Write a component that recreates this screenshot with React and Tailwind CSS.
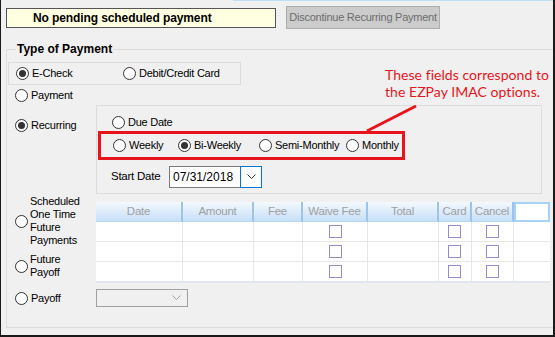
import React from "react";

const cols = [
  { name: "Date", w: "w-[87px]" },
  { name: "Amount", w: "w-[71px]" },
  { name: "Fee", w: "w-[49px]" },
  { name: "Waive Fee", w: "w-[65px]", box: "ml-[26px]" },
  { name: "Total", w: "w-[71px]" },
  { name: "Card", w: "w-[33px]", box: "ml-[9px]" },
  { name: "Cancel", w: "w-[42px]", box: "ml-[14px]" },
];

const Radio = ({ checked, label, className = "" }) => (
  <div className={`flex items-center ${className}`}>
    <span className="w-[13px] h-[13px] rounded-full border border-[#333] bg-white flex items-center justify-center shrink-0">
      {checked && <span className="w-[7px] h-[7px] rounded-full bg-[#333]" />}
    </span>
    {label && <span className="ml-[3px] leading-[13px] whitespace-nowrap">{label}</span>}
  </div>
);

const Check = ({ className }) => (
  <span className={`block w-[13px] h-[13px] border border-[#958dcb] bg-white ${className}`} />
);

const Chevron = ({ color = "#333" }) => (
  <svg width="9" height="6" viewBox="0 0 9 6">
    <path d="M0.5 0.5 L4.5 4.5 L8.5 0.5" fill="none" stroke={color} strokeWidth="1" />
  </svg>
);

export default function App() {
  return (
    <div
      className="relative w-[555px] h-[337px] bg-[#f0f0f0] border-l-[1px] border-r-2 border-b-2 border-[#1a1a1a] text-[11px] tracking-[-0.25px] text-black overflow-hidden"
      style={{ fontFamily: '"Liberation Sans", Arial, sans-serif' }}
    >
      <div className="absolute top-0 left-[232px] right-0 h-[1px] bg-[#bfe0f2]" />

      {/* top bar */}
      <div className="flex items-center pt-[6px] pl-[5px]">
        <div className="w-[270px] h-[20px] bg-[#ffffe1] border border-[#555] flex items-center pl-[26px] font-bold text-[12px] tracking-[-0.1px] whitespace-nowrap">
          No pending scheduled payment
        </div>
        <div className="ml-[10px] w-[154px] h-[23px] bg-[#cccccc] border border-[#adadad] flex items-center justify-center text-[#6d6d6d] whitespace-nowrap">
          Discontinue Recurring Payment
        </div>
      </div>

      {/* group box */}
      <div className="relative mt-[20px] ml-[5px] w-[560px] h-[279px] border border-[#dcdcdc]">
        <span className="absolute -top-[8px] left-[9px] px-[1px] bg-[#f0f0f0] font-bold text-[12px] tracking-[0px] leading-[14px]">
          Type of Payment
        </span>

        <div className="mt-[12px] ml-[1px] w-[233px] h-[23px] border border-[#dcdcdc] flex items-center pl-[7px]">
          <Radio checked label="E-Check" className="w-[107px]" />
          <Radio label="Debit/Credit Card" />
        </div>

        <Radio label="Payment" className="mt-[4px] ml-[8px]" />

        <div className="flex mt-[3px]">
          <div className="w-[89px] pl-[8px] pt-[14px]">
            <Radio checked label="Recurring" />
          </div>
          <div className="w-[446px] h-[89px] border border-[#dcdcdc]">
            <Radio label="Due Date" className="mt-[10px] ml-[15px]" />
            <div className="mt-[2px] ml-[1px] w-[307px] h-[29px] border-[3px] border-[#e8141c] flex items-center pl-[12px]">
              <Radio label="Weekly" className="w-[65px]" />
              <Radio checked label="Bi-Weekly" className="w-[81px]" />
              <Radio label="Semi-Monthly" className="w-[87px]" />
              <Radio label="Monthly" />
            </div>
            <div className="flex items-center mt-[6px] ml-[14px]">
              <span className="w-[58px] text-[11.5px]">Start Date</span>
              <div className="relative w-[93px] h-[22px] border border-[#7a7a7a] bg-white flex items-center pl-[3px] text-[12px] tracking-[0px]">
                07/31/2018
                <div className="absolute right-[-1px] top-[-1px] w-[22px] h-[22px] border border-[#0078d7] flex items-center justify-center">
                  <Chevron />
                </div>
              </div>
            </div>
          </div>
        </div>

        {/* scheduled table */}
        <div className="flex mt-[8px]">
          <div className="w-[89px] pl-[8px]">
            <div className="flex items-center mt-[-7px]">
              <Radio />
              <div className="ml-[2px] leading-[13px]">
                Scheduled<br />One Time<br />Future<br />Payments
              </div>
            </div>
            <div className="flex items-center mt-[6px]">
              <Radio />
              <div className="ml-[2px] leading-[13px]">
                Future<br />Payoff
              </div>
            </div>
          </div>
          <div className="w-[454px] border-b border-[#dbe7f3]">
            <div className="flex h-[20px]">
              {cols.map((c) => (
                <div
                  key={c.name}
                  className={`${c.w} h-full flex items-center justify-center text-[#a0a0a0] text-[11.5px] bg-gradient-to-b from-[#f4f9fe] to-[#c6dff7] border-r-2 border-[#9cc3ea] border-b border-b-[#b9d6f2] whitespace-nowrap`}
                >
                  {c.name}
                </div>
              ))}
              <div className="w-[36px] h-full bg-white border-2 border-[#a6d2f7]" />
            </div>
            {[0, 1, 2].map((r) => (
              <div key={r} className="flex h-[20px] bg-white">
                {cols.map((c) => (
                  <div
                    key={c.name}
                    className={`${c.w} h-full flex items-center border-r border-b border-[#e6e6e6]`}
                  >
                    {c.box && <Check className={c.box} />}
                  </div>
                ))}
                <div className="w-[36px] h-full border-b border-[#e6e6e6]" />
              </div>
            ))}
          </div>
        </div>

        <div className="flex items-center mt-[6px]">
          <div className="w-[89px] pl-[8px]">
            <Radio label="Payoff" />
          </div>
          <div className="w-[92px] h-[18px] bg-[#f0f0f0] border border-[#a0a0a0] flex items-center justify-end pr-[6px]">
            <Chevron color="#a0a0a0" />
          </div>
        </div>
      </div>

      {/* annotation */}
      <div
        className="absolute left-[384px] top-[66px] text-[#e8141c] text-[14px] leading-[17px] tracking-[0.05px]"
        style={{ fontFamily: "Lato, sans-serif" }}
      >
        These fields correspond to
        <br />
        the EZPay IMAC options.
      </div>
      <svg className="absolute left-0 top-0" width="555" height="337">
        <line x1="366" y1="131" x2="415" y2="106" stroke="#e8141c" strokeWidth="3" />
      </svg>
    </div>
  );
}
